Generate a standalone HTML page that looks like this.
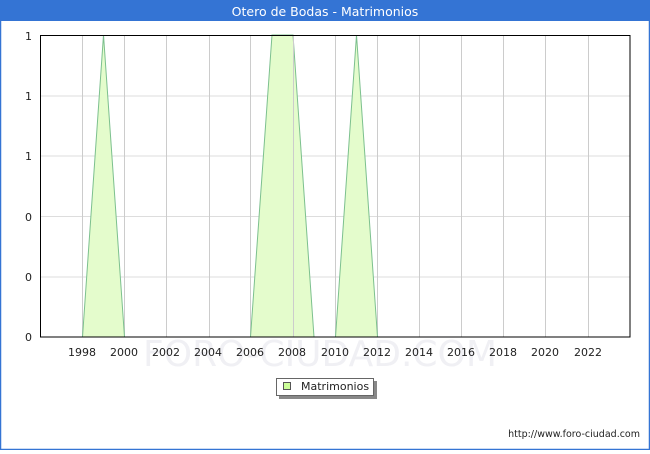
<!DOCTYPE html>
<html><head><style>
body{margin:0;width:650px;height:450px;overflow:hidden;font-family:"DejaVu Sans","Liberation Sans",sans-serif;}
</style></head><body>
<svg width="650" height="450" xmlns="http://www.w3.org/2000/svg" font-family="DejaVu Sans, Liberation Sans, sans-serif">
<rect x="0" y="0" width="650" height="450" fill="#fff"/>
<rect x="0.5" y="0.5" width="649" height="449" fill="none" stroke="#3474d4" stroke-width="1.5"/>
<rect x="0" y="0" width="650" height="21" fill="#3474d4"/>
<text x="325" y="16" fill="#fff" font-size="12.5" text-anchor="middle">Otero de Bodas - Matrimonios</text>
<text x="320" y="366" fill="#f0f0f4" font-size="36" text-anchor="middle">FORO-CIUDAD.COM</text>
<g stroke="#dddddd" stroke-width="1">
<line x1="40" y1="96" x2="630" y2="96"/><line x1="40" y1="156" x2="630" y2="156"/>
<line x1="40" y1="216.5" x2="630" y2="216.5"/><line x1="40" y1="277" x2="630" y2="277"/>
</g>
<g stroke="#cccccc" stroke-width="1">
<line x1="82.5" y1="35" x2="82.5" y2="337"/><line x1="124.5" y1="35" x2="124.5" y2="337"/>
<line x1="166.5" y1="35" x2="166.5" y2="337"/><line x1="209.5" y1="35" x2="209.5" y2="337"/>
<line x1="250.5" y1="35" x2="250.5" y2="337"/><line x1="293.5" y1="35" x2="293.5" y2="337"/>
<line x1="335.5" y1="35" x2="335.5" y2="337"/><line x1="377.5" y1="35" x2="377.5" y2="337"/>
<line x1="419.5" y1="35" x2="419.5" y2="337"/><line x1="461.5" y1="35" x2="461.5" y2="337"/>
<line x1="503.5" y1="35" x2="503.5" y2="337"/><line x1="545.5" y1="35" x2="545.5" y2="337"/>
<line x1="588.5" y1="35" x2="588.5" y2="337"/>
</g>
<g fill="#e4fccc" stroke="#7cc08e" stroke-width="1">
<polygon points="82.5,337 103.5,35 124.5,337"/>
<polygon points="250.5,337 272,35 293,35 314,337"/>
<polygon points="335.5,337 356.5,35 377.5,337"/>
</g>
<line x1="293.5" y1="35" x2="293.5" y2="337" stroke="#cccccc"/>
<rect x="40.5" y="35.5" width="589.5" height="301.5" fill="none" stroke="#000" stroke-width="1"/>
<g font-size="11" fill="#222" text-anchor="end">
<text x="32" y="40">1</text><text x="32" y="100">1</text><text x="32" y="160">1</text>
<text x="32" y="221">0</text><text x="32" y="281">0</text><text x="32" y="341">0</text>
</g>
<g font-size="11" fill="#222" text-anchor="middle">
<text x="82" y="356">1998</text><text x="124" y="356">2000</text><text x="166" y="356">2002</text>
<text x="208" y="356">2004</text><text x="250" y="356">2006</text><text x="292" y="356">2008</text>
<text x="335" y="356">2010</text><text x="377" y="356">2012</text><text x="419" y="356">2014</text>
<text x="461" y="356">2016</text><text x="503" y="356">2018</text><text x="545" y="356">2020</text>
<text x="588" y="356">2022</text>
</g>
<rect x="279" y="381" width="98" height="18" fill="#888"/>
<rect x="276.5" y="378.5" width="97" height="17" fill="#fff" stroke="#666"/>
<rect x="283.5" y="382.5" width="7" height="7" fill="#ccff99" stroke="#555"/>
<text x="301" y="390" font-size="11" fill="#222">Matrimonios</text>
<text x="640" y="437" font-size="9.5" fill="#222" text-anchor="end">http://www.foro-ciudad.com</text>
</svg>
</body></html>
